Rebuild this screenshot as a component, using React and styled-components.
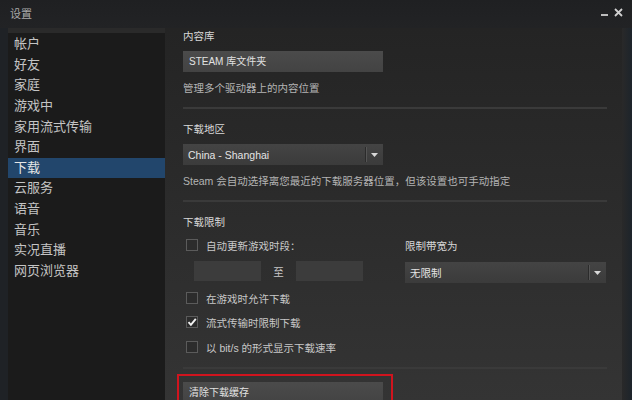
import React from 'react';
import styled, { createGlobalStyle } from 'styled-components';

const GlobalStyle = createGlobalStyle`
  html, body {
    margin: 0;
    padding: 0;
    background: #1e2125;
  }
  body {
    font-family: "Liberation Sans", "Noto Sans CJK SC", sans-serif;
  }
`;

const Window = styled.div`
  width: 632px;
  height: 400px;
  overflow: hidden;
  display: flex;
  flex-direction: column;
  background: #1f2226;
`;

const TitleBar = styled.div`
  height: 28px;
  flex: none;
  display: flex;
  align-items: center;
  justify-content: space-between;
  padding: 0 9px 2px 10px;
  background: linear-gradient(#1f2022, #222325);
  color: #a9a9a9;
  font-size: 11px;
  box-sizing: border-box;
`;

const Controls = styled.div`
  display: flex;
  align-items: center;
  gap: 6px;
  margin-top: -1px;
`;

const Body = styled.div`
  flex: 1;
  display: flex;
  padding-left: 8px;
  min-height: 0;
`;

const Sidebar = styled.nav`
  width: 157px;
  flex: none;
  background: #1b1b1b;
  border-top: 5px solid #2a2a2a;
  padding-top: 1px;
`;

const NavItem = styled.div`
  height: 20.64px;
  line-height: 20.64px;
  padding-left: 6px;
  font-size: 13px;
  color: ${({ active }) => (active ? '#e6e6e6' : '#c4c4c4')};
  background: ${({ active }) => (active ? '#22466c' : 'transparent')};
  white-space: nowrap;
`;

const Content = styled.main`
  flex: 1;
  min-width: 0;
  padding: 0 15px 0 18px;
  background: linear-gradient(#242424, #2b2b2b 45%, #343434);
  overflow: hidden;
  font-size: 10.5px;
`;

const RightEdge = styled.div`
  width: 10px;
  flex: none;
  background: linear-gradient(90deg, #292929, #1d242b);
`;

const Label = styled.div`
  height: 16px;
  line-height: 16px;
  color: #d8d8d8;
  margin-top: ${({ top }) => top || 0}px;
  white-space: nowrap;
`;

const Desc = styled.div`
  height: 16px;
  line-height: 16px;
  color: #b4b4b4;
  margin-top: 8px;
  white-space: nowrap;
`;

const Separator = styled.div`
  height: 2px;
  background: #3a3a3a;
  margin-top: ${({ top }) => top || 11}px;
`;

const Button = styled.div`
  width: 200px;
  height: 21px;
  line-height: 21px;
  box-sizing: border-box;
  padding-left: 6px;
  margin-top: ${({ top }) => top || 0}px;
  background: linear-gradient(#4b4b4b, #434343);
  color: #e2e2e2;
  font-size: 10px;
  white-space: nowrap;
`;

const Select = styled.div`
  width: ${({ w }) => w}px;
  height: 21px;
  box-sizing: border-box;
  margin-top: ${({ top }) => top || 0}px;
  display: flex;
  align-items: center;
  background: linear-gradient(#444, #3b3b3b);
  color: #e4e4e4;
  font-size: 10.5px;
`;

const SelectValue = styled.span`
  flex: 1;
  padding-left: 5px;
  white-space: nowrap;
`;

const SelectArrow = styled.span`
  width: 17px;
  height: 15px;
  border-left: 1px solid #2b2b2b;
  box-shadow: inset 1px 0 0 #555;
  display: flex;
  align-items: center;
  justify-content: center;
`;

const LimitGrid = styled.div`
  display: grid;
  grid-template-columns: 222px 201px;
  margin-top: 7px;
`;

const Column = styled.div`
  display: flex;
  flex-direction: column;
`;

const CheckRow = styled.div`
  height: 16px;
  display: flex;
  align-items: center;
  margin-top: ${({ top }) => top || 0}px;
  color: #c8c8c8;
  white-space: nowrap;
`;

const Box = styled.span`
  width: 12px;
  height: 12px;
  box-sizing: border-box;
  margin-left: 3px;
  margin-right: 8px;
  border: 1px solid #5b5b5b;
  background: #2c2c2c;
  position: relative;
  flex: none;
`;

const TimeRow = styled.div`
  display: flex;
  align-items: center;
  margin-top: 8px;
  padding-left: 11px;
`;

const TimeInput = styled.div`
  width: 67px;
  height: 20px;
  background: #3c3c3c;
`;

const To = styled.span`
  width: 35px;
  text-align: center;
  color: #c8c8c8;
`;

const Highlight = styled.div`
  width: 216px;
  height: 60px;
  box-sizing: border-box;
  margin: 5px 0 0 -6px;
  border: 2px solid #d0141e;
  padding: 6px 0 0 4px;
`;

const navItems = ['帐户', '好友', '家庭', '游戏中', '家用流式传输', '界面', '下载', '云服务', '语音', '音乐', '实况直播', '网页浏览器'];

const Arrow = () => (
  <svg width="7" height="4" viewBox="0 0 7 4">
    <path d="M0 0h7L3.5 4z" fill="#d8d8d8" />
  </svg>
);

const Check = ({ checked, children, top }) => (
  <CheckRow top={top}>
    <Box>
      {checked && (
        <svg width="12" height="12" viewBox="0 0 12 12" style={{ position: 'absolute', left: -1, top: -1 }}>
          <path d="M2.5 6.2l2.4 2.6L9.8 2.8" fill="none" stroke="#f2f2f2" strokeWidth="1.9" />
        </svg>
      )}
    </Box>
    {children}
  </CheckRow>
);

export default function App() {
  return (
    <>
      <GlobalStyle />
      <Window>
        <TitleBar>
          <span>设置</span>
          <Controls>
            <svg width="7" height="10" viewBox="0 0 7 10">
              <rect x="0" y="6" width="7" height="2" fill="#bdbdbd" />
            </svg>
            <svg width="9" height="9" viewBox="0 0 9 9">
              <path d="M1 1l7 7M8 1L1 8" stroke="#d0d0d0" strokeWidth="1.8" />
            </svg>
          </Controls>
        </TitleBar>
        <Body>
          <Sidebar>
            {navItems.map((n) => (
              <NavItem key={n} active={n === '下载'}>{n}</NavItem>
            ))}
          </Sidebar>
          <Content>
            <Label>内容库</Label>
            <Button top={7}>STEAM 库文件夹</Button>
            <Desc>管理多个驱动器上的内容位置</Desc>
            <Separator />

            <Label top={12}>下载地区</Label>
            <Select w={200} top={7}>
              <SelectValue>China - Shanghai</SelectValue>
              <SelectArrow><Arrow /></SelectArrow>
            </Select>
            <Desc>Steam 会自动选择离您最近的下载服务器位置，但该设置也可手动指定</Desc>
            <Separator />

            <Label top={12}>下载限制</Label>
            <LimitGrid>
              <Column>
                <Check>自动更新游戏时段：</Check>
                <TimeRow>
                  <TimeInput />
                  <To>至</To>
                  <TimeInput />
                </TimeRow>
              </Column>
              <Column>
                <Label top={1}>限制带宽为</Label>
                <Select w={201} top={8}>
                  <SelectValue>无限制</SelectValue>
                  <SelectArrow><Arrow /></SelectArrow>
                </Select>
              </Column>
            </LimitGrid>
            <Check top={7}>在游戏时允许下载</Check>
            <Check top={8} checked>流式传输时限制下载</Check>
            <Check top={9}>以 bit/s 的形式显示下载速率</Check>
            <Separator top={12} />

            <Highlight>
              <Button>清除下载缓存</Button>
            </Highlight>
          </Content>
          <RightEdge />
        </Body>
      </Window>
    </>
  );
}
